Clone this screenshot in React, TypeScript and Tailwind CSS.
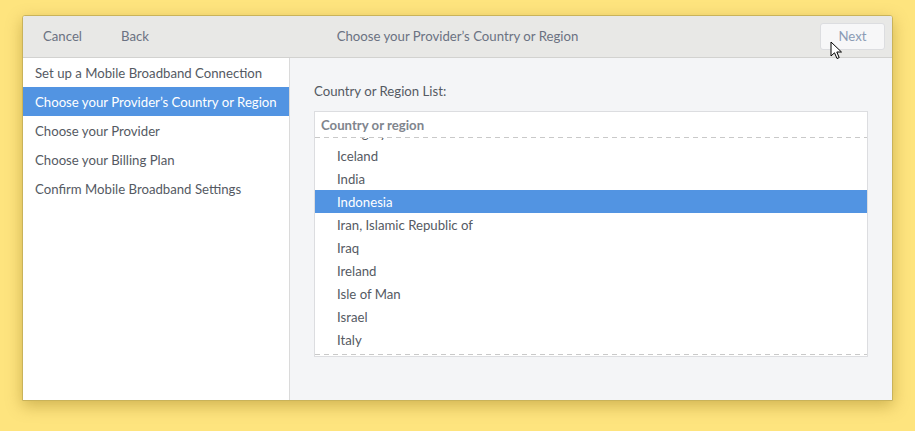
const steps = [
  "Set up a Mobile Broadband Connection",
  "Choose your Provider\u2019s Country or Region",
  "Choose your Provider",
  "Choose your Billing Plan",
  "Confirm Mobile Broadband Settings",
]

const countries = [
  "Hungary",
  "Iceland",
  "India",
  "Indonesia",
  "Iran, Islamic Republic of",
  "Iraq",
  "Ireland",
  "Isle of Man",
  "Israel",
  "Italy",
  "Jamaica",
]

function Pointer() {
  return (
    <svg width="14" height="20" viewBox="0 0 14 20" className="absolute left-[830px] top-[41px]">
      <path
        d="M1 1 L1 15 L4.5 11.8 L7 17.5 L9.2 16.6 L6.8 11 L11.5 11 Z"
        fill="#ffffff"
        stroke="#000000"
        strokeWidth="1"
        strokeLinejoin="round"
      />
    </svg>
  )
}

const dashed = "h-px shrink-0 bg-[repeating-linear-gradient(90deg,#c9c9c9_0_5px,transparent_5px_9px)]"

export default function App() {
  return (
    <div className="relative w-[915px] h-[431px] bg-[#fee47e] pt-[15px] pl-[22px] font-['Lato','Noto_Sans',sans-serif] text-[13.2px]">
      <div className="w-[871px] h-[386px] flex flex-col rounded-t-[3px] border border-[#c9b35a] bg-white shadow-[0_5px_16px_rgba(120,90,0,0.35)] overflow-hidden">
        {/* header bar */}
        <div className="h-[42px] shrink-0 grid grid-cols-[1fr_auto_1fr] items-center bg-[#e8e8e6] border-b border-[#d2d2d0] text-[#6b7282]">
          <div className="flex items-center">
            <span className="ml-[20px]">Cancel</span>
            <span className="ml-[39px]">Back</span>
          </div>
          <span className="text-center">Choose your Provider&rsquo;s Country or Region</span>
          <div className="flex justify-end">
            <button className="mr-[7px] w-[65px] h-[27px] rounded-[3px] border border-[#dcdde0] bg-[#f7f7f8] text-[#8b9bb5]">
              Next
            </button>
          </div>
        </div>

        <div className="flex flex-1 min-h-0">
          {/* steps sidebar */}
          <div className="w-[267px] shrink-0 bg-white border-r border-[#dadada]">
            {steps.map((s, i) => (
              <div
                key={s}
                className={`h-[29px] flex items-center pl-[12px] pt-[2px] ${
                  i === 1 ? "bg-[#5294e2] text-white" : "text-[#555a63]"
                }`}
              >
                {s}
              </div>
            ))}
          </div>

          {/* content */}
          <div className="flex-1 bg-[#f4f5f7] pl-[24px] pr-[24px] pt-[24px]">
            <div className="leading-[18px] text-[#555a63]">Country or Region List:</div>
            <div className="mt-[11px] h-[246px] flex flex-col border border-[#dcdde0] bg-white">
              <div className="h-[25px] shrink-0 flex items-center pl-[6px] pt-[2px] font-bold text-[#80858d]">
                Country or region
              </div>
              <div className={dashed} />
              <div className="flex-1 overflow-hidden">
                <div className="-mt-[17px]">
                  {countries.map((c) => (
                    <div
                      key={c}
                      className={`h-[23px] flex items-center pl-[22px] pt-[2px] ${
                        c === "Indonesia" ? "bg-[#5294e2] text-white" : "text-[#555a63]"
                      }`}
                    >
                      {c}
                    </div>
                  ))}
                </div>
              </div>
              <div className={dashed} />
              <div className="h-px shrink-0" />
            </div>
          </div>
        </div>
      </div>
      <Pointer />
    </div>
  )
}
